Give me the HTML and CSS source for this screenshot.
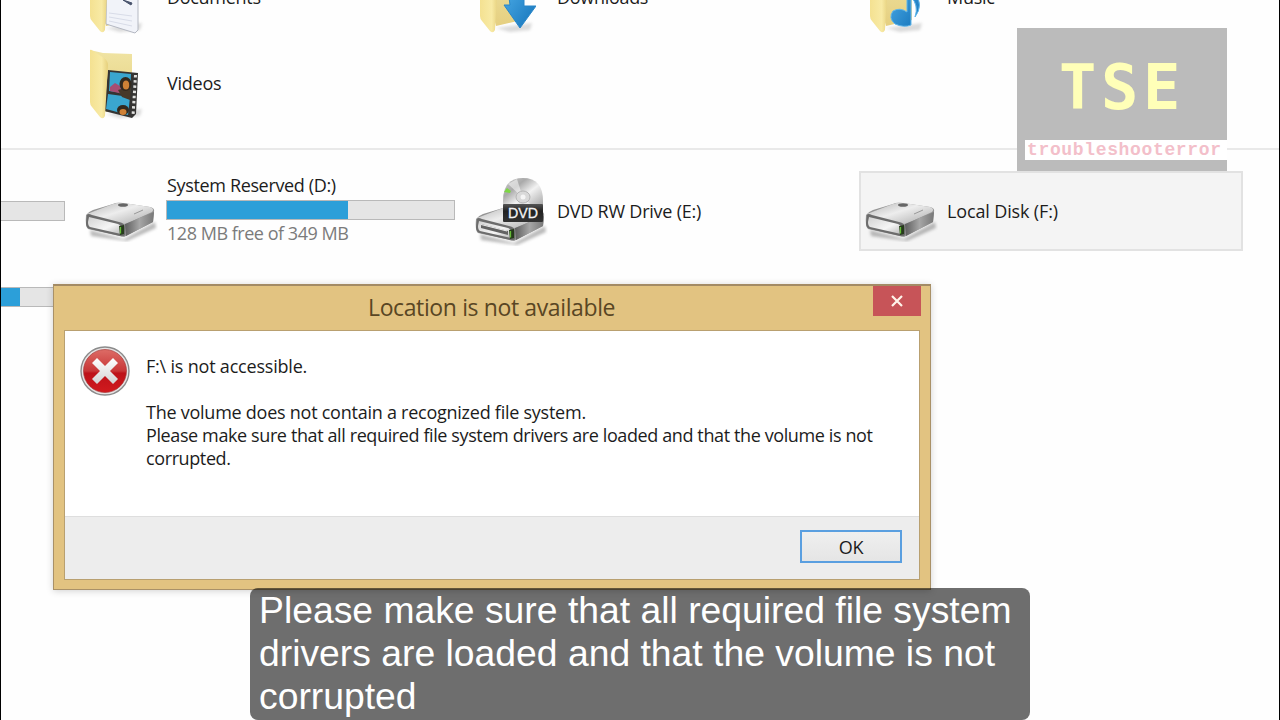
FILE: index.html
```html
<!DOCTYPE html>
<html lang="en">
<head>
<meta charset="utf-8">
<title>Location is not available</title>
<link rel="stylesheet" href="styles.css">
</head>
<body>
<svg class="defs" width="0" height="0" aria-hidden="true">
  <defs>
    <linearGradient id="front" x1="0" y1="0" x2="1" y2="0"><stop offset="0" stop-color="#f4e191"/><stop offset=".65" stop-color="#f8eaa5"/><stop offset="1" stop-color="#e6d07c"/></linearGradient>
    <linearGradient id="back" x1="0" y1="0" x2="0" y2="1"><stop offset="0" stop-color="#f0e4a3"/><stop offset="1" stop-color="#e5cf80"/></linearGradient>
    <linearGradient id="blue" x1="0" y1="0" x2="1" y2="1"><stop offset="0" stop-color="#4fb0ea"/><stop offset="1" stop-color="#1472b9"/></linearGradient>
    <linearGradient id="top" x1="0" y1="0" x2="1" y2="1"><stop offset="0" stop-color="#b4b4b4"/><stop offset=".45" stop-color="#ededed"/><stop offset="1" stop-color="#a9a9a9"/></linearGradient>
    <linearGradient id="side" x1="0" y1="0" x2="1" y2="0"><stop offset="0" stop-color="#5e5e5e"/><stop offset=".5" stop-color="#a6a6a6"/><stop offset="1" stop-color="#777"/></linearGradient>
    <linearGradient id="face" x1="0" y1="0" x2="1" y2="1"><stop offset="0" stop-color="#d2d2d2"/><stop offset=".6" stop-color="#f5f5f5"/><stop offset="1" stop-color="#b9b9b9"/></linearGradient>
    <linearGradient id="disc" x1="0" y1="0" x2="1" y2="1"><stop offset="0" stop-color="#ccc"/><stop offset=".3" stop-color="#aaa"/><stop offset=".55" stop-color="#f2f2f2"/><stop offset="1" stop-color="#999"/></linearGradient>
    <linearGradient id="plate" x1="0" y1="0" x2="0" y2="1"><stop offset="0" stop-color="#555"/><stop offset=".4" stop-color="#222"/><stop offset="1" stop-color="#333"/></linearGradient>
    <linearGradient id="red" x1="0" y1="0" x2="0" y2="1"><stop offset="0" stop-color="#dd6c66"/><stop offset=".5" stop-color="#c83637"/><stop offset=".55" stop-color="#bd1219"/><stop offset="1" stop-color="#d11a1e"/></linearGradient>
    <linearGradient id="cross" x1="0" y1="0" x2="0" y2="1"><stop offset="0" stop-color="#fff"/><stop offset="1" stop-color="#d3d3d3"/></linearGradient>
    <filter id="soft" x="-20%" y="-60%" width="140%" height="220%"><feGaussianBlur stdDeviation="1.6"/></filter>
    <symbol id="folder" viewBox="0 0 60 72">
      <path d="M20 66L34 70 54 68 56 61Z" fill="#999" opacity=".35" filter="url(#soft)"/>
      <path d="M4 2L17 5 46 6V58L20 64Z" fill="url(#back)"/>
    </symbol>
    <symbol id="flap" viewBox="0 0 60 72">
      <path d="M4 2Q5 1 7 3L18 10Q22 13 22 17L19 68Q17 72 14 69L6 59Q4 57 4 54Z" fill="url(#front)"/>
    </symbol>
    <symbol id="drive" viewBox="0 0 74 42">
      <path d="M6 30L40 39 71 22 72 28 43 41 7 36Z" fill="#777" opacity=".5" filter="url(#soft)"/>
      <path d="M2 15Q4 12 9 10L29 4Q32 2 39 3L66 7Q71 8 70 12L69 22 40 37 4 29Q1 27 2 15Z" fill="#959595"/>
      <path d="M3 14L29 4Q34 2 40 3L66 7Q71 9 68 12L42 24Q37 24 32 22L6 16Z" fill="url(#top)"/>
      <path d="M41 24L70 12 69 22 42 36Z" fill="url(#side)"/>
      <path d="M3 15Q4 13 8 15L35 22Q41 23 41 28V34Q41 37 36 36L6 29Q2 28 2 23Z" fill="#6c6c6c"/>
      <path d="M5 17L34 24Q37 25 37 28V34L6 27Q4 26 4 22Z" fill="url(#face)"/>
      <ellipse cx="39" cy="5" rx="5" ry="1.8" fill="#666"/>
      <path d="M50 14L59 10" stroke="#999"/>
      <path d="M35 26L40 25V34L36 35Z" fill="#263a1c"/><path d="M36.5 27V33.5" stroke="#65bc36" stroke-width="1.3"/>
    </symbol>
  </defs>
</svg>

<main class="explorer">
  <section class="grid folders">
    <div class="tile tile-docs">
      <svg class="icon" viewBox="0 0 60 72"><use href="#folder"/><path d="M21 5L52 9V68L49 71 20 62Z" fill="#f1f3f9" stroke="#b4b8c2"/><path d="M37 38L46 41 45 43Z" fill="#48536c" stroke="#48536c"/><path d="M23 51L46 54M23 55L46 59M23 59L46 64" stroke="#d8dce8"/><use href="#flap"/></svg>
      <span class="name w-docs">Documents</span>
    </div>
    <div class="tile">
      <svg class="icon" viewBox="0 0 60 72"><use href="#folder"/><use href="#flap"/><path d="M31 20H48V44H60L44 66 28 43H34Z" fill="url(#blue)" stroke="#2986c8"/></svg>
      <span class="name w-docs">Downloads</span>
    </div>
    <div class="tile">
      <svg class="icon" viewBox="0 0 60 72"><use href="#folder"/><use href="#flap"/><path d="M41 22V50Q34 45 27 49 22 56 29 62 38 66 45 63V35Q53 43 49 55 58 43 49 31L45 20Z" fill="url(#blue)" stroke="#60b6ea"/></svg>
      <span class="name">Music</span>
    </div>
    <div class="tile">
      <svg class="icon" viewBox="0 0 60 72"><use href="#folder"/>
        <path d="M22 22L52 25 50 66 46 70 18 63Z" fill="#353433"/>
        <path d="M24 24L45 26 44 46 23 43ZM22 46L44 49 42 67 20 61Z" fill="#3aa6cf"/>
        <path d="M24 39L29 35 34 38 37 46 24 43Z" fill="#a74e73"/><path d="M32 42L45 38 44 52 36 49Z" fill="#473929"/>
        <ellipse cx="39.500" cy="36" rx="6" ry="7" fill="#33291e"/><ellipse cx="40" cy="37" rx="3.200" ry="4.500" fill="#cf8136"/>
        <ellipse cx="37" cy="62" rx="6" ry="5" fill="#33291e"/><ellipse cx="37" cy="64" rx="3.500" ry="3" fill="#cf8136"/>
        <path d="M49.500 27L47 68" stroke="#e1e1df" stroke-width="3" stroke-dasharray="2.5 2.7"/>
        <use href="#flap"/></svg>
      <span class="name">Videos</span>
    </div>
  </section>

  <hr class="divider">

  <section class="grid drives">
    <div class="tile volume">
      <div class="details"><div class="bar"></div></div>
    </div>
    <div class="tile volume">
      <svg class="drive" viewBox="0 0 74 42"><use href="#drive"/></svg>
      <div class="details">
        <span class="name w-sys">System Reserved (D:)</span>
        <div class="bar"><div class="fill" style="width:63.200%"></div></div>
        <span class="free">128 MB free of 349 MB</span>
      </div>
    </div>
    <div class="tile volume">
      <svg class="dvd" viewBox="0 0 74 74">
        <svg y="28" width="74" height="42" viewBox="0 0 74 42"><use href="#drive"/><path d="M7 20L34 27V31L7 24Z" fill="#636363"/><path d="M7 20.500L33 27" stroke="#eee"/></svg>
        <path d="M29 25Q29 2 49 2T69 25V34H29Z" fill="url(#disc)"/>
        <path d="M49 22L34 8 43 3ZM49 22L64 34H50Z" fill="#fff" opacity=".5"/>
        <ellipse cx="49" cy="21" rx="7" ry="6" fill="#d9d9d9" stroke="#b5b5b5"/><circle cx="49" cy="21" r="2.500" fill="#f5f5f5"/>
        <path d="M30 16L33 12 37 15 36 17Z" fill="#7cd843"/>
        <rect x="29" y="28" width="40" height="18" rx="1" fill="url(#plate)"/>
        <text class="dvd-text" x="49" y="42" text-anchor="middle" textLength="30" lengthAdjust="spacingAndGlyphs">DVD</text>
      </svg>
      <div class="details"><span class="name w-dvd">DVD RW Drive (E:)</span></div>
    </div>
    <div class="tile volume hovered">
      <svg class="drive" viewBox="0 0 74 42"><use href="#drive"/></svg>
      <div class="details"><span class="name w-local">Local Disk (F:)</span></div>
    </div>
    <div class="tile volume">
      <div class="details"><div class="bar"><div class="fill" style="width:84.700%"></div></div></div>
    </div>
  </section>
</main>

<aside class="watermark">
  <div class="mark">TSE</div>
  <div class="mark-strip"><span class="mark-name">troubleshooterror</span></div>
</aside>

<div class="dialog" role="alertdialog">
  <header class="titlebar">
    <span class="title">Location is not available</span>
    <button class="close" aria-label="Close"><svg width="12" height="12" viewBox="0 0 12 12"><path d="M1 1L11 11M11 1L1 11" stroke="#fff4ea" stroke-width="2.200"/></svg></button>
  </header>
  <div class="client">
    <div class="message">
      <svg class="error" viewBox="0 0 50 50"><circle cx="25" cy="25" r="24" fill="#e6e4e4" stroke="#8b8b8b" stroke-width="1.400"/><circle cx="25" cy="25" r="21.500" fill="url(#red)" stroke="#a93a3a" stroke-width=".7"/><path d="M12 17L17 12 25 20 33 12 38 17 30 25 38 33 33 38 25 30 17 38 12 33 20 25Z" fill="url(#cross)"/></svg>
      <div class="text">
        <p class="lead">F:\ is not accessible.</p>
        <p class="line-a">The volume does not contain a recognized file system.</p>
        <p>Please make sure that all required file system drivers are loaded and that the volume is not<br>corrupted.</p>
      </div>
    </div>
    <footer class="actions"><button class="ok">OK</button></footer>
  </div>
</div>

<div class="caption">Please make sure that all required file system<br>drivers are loaded and that the volume is not<br>corrupted</div>
</body>
</html>
```
FILE: styles.css
```css
* { box-sizing: border-box; }
body {
  position: relative;
  width: 1280px;
  height: 720px;
  margin: 0;
  overflow: hidden;
  background: #fefefe;
  font-family: "Open Sans", "Noto Sans", sans-serif;
  font-size: 18px;
  color: #1c1c1c;
}
p { margin: 0; }
button { font: inherit; padding: 0; border: 0; }
.defs { position: absolute; }

.explorer {
  height: 720px;
  overflow: hidden;
  border-left: 1px solid #000;
  border-right: 1px solid #000;
}
.grid { display: grid; gap: 7px 6px; }
.folders {
  grid-template-columns: repeat(3, 384px);
  margin: -42px 0 0 79px;
}
.drives {
  grid-template-columns: repeat(4, 384px);
  margin: 21px 0 0 -312px;
}
.tile {
  display: flex;
  align-items: center;
  height: 79px;
  padding-left: 6px;
}
.icon { width: 60px; height: 72px; flex: none; }
.folders .name { margin-left: 21px; padding-bottom: 2px; }
.name { display: block; line-height: 24px; letter-spacing: -.25px; white-space: nowrap; }
.w-docs { letter-spacing: -.3px; }
.w-sys { margin: -2px 0 3px; letter-spacing: -.35px; }
.w-dvd { letter-spacing: -.23px; }
.w-local { letter-spacing: -.14px; }
.divider { height: 2px; margin: 25px 0 0; border: 0; background: #e9e9e9; }

.volume { padding-left: 5px; }
.drive { width: 74px; height: 42px; flex: none; margin-top: 20px; }
.dvd { width: 74px; height: 74px; flex: none; margin-top: 4px; }
.dvd-text { font: 15px "Liberation Sans", sans-serif; fill: #f3f3f3; stroke: #f3f3f3; stroke-width: .3px; }
.details { width: 289px; margin-left: 8px; }
.volume > .details:first-child { margin-left: 82px; }
.bar { height: 20px; border: 1px solid #b9b9b9; background: #e5e5e5; }
.fill { height: 18px; background: #2c9fd9; }
.volume .name, .free { padding-left: 1px; }
.free { display: block; line-height: 26px; letter-spacing: -.47px; color: #7b7b7b; }
.hovered { height: 80px; margin-bottom: -1px; border: 2px solid #e2e2e2; padding-left: 3px; background: #f4f4f4; }

.watermark {
  position: absolute;
  left: 1017px;
  top: 28px;
  width: 210px;
  height: 143px;
  padding-left: 8px;
  background: #bbb;
}
.mark {
  height: 112px;
  padding-left: 34px;
  font: bold 62px/120px "DejaVu Sans Mono", monospace;
  letter-spacing: 4.700px;
  color: #ffffb8;
}
.mark-strip { height: 20px; padding-left: 2px; background: #fff; }
.mark-name {
  display: block;
  font: bold 18px/21px "Liberation Mono", monospace;
  letter-spacing: .65px;
  color: #f3bfca;
}

.dialog {
  position: absolute;
  left: 53px;
  top: 284px;
  width: 878px;
  height: 306px;
  padding: 0 10px 10px;
  border: 1px solid #a99168;
  border-top: 2px solid #a38b65;
  background: #e2c381;
  box-shadow: 0 1px 7px rgba(0, 0, 0, .18);
}
.titlebar { display: flex; height: 44px; }
.title {
  flex: 1;
  padding-left: 304px;
  font-size: 23px;
  line-height: 43px;
  letter-spacing: -.38px;
  color: #594624;
}
.close {
  display: flex;
  align-items: center;
  justify-content: center;
  width: 48px;
  height: 30px;
  margin-right: -1px;
  background: #c75458;
}
.client {
  display: flex;
  flex-direction: column;
  height: 250px;
  border: 1px solid #b9a070;
  background: #fff;
}
.message { display: flex; flex: 1; padding: 15px 0 0 15px; }
.error { width: 50px; height: 50px; flex: none; }
.text { padding: 9px 0 0 16px; line-height: 23px; letter-spacing: -.39px; white-space: nowrap; }
.lead { margin-bottom: 23px; letter-spacing: -.2px; }
.line-a { letter-spacing: -.25px; }
.actions {
  display: flex;
  justify-content: flex-end;
  align-items: center;
  height: 63px;
  padding: 0 17px 3px 0;
  border-top: 1px solid #dedede;
  background: #ededed;
}
.ok {
  width: 102px;
  height: 33px;
  border: 2px solid #5a9fe0;
  background: linear-gradient(#efefef, #e5e5e5);
  color: #1c1c1c;
  letter-spacing: -.3px;
}

.caption {
  position: absolute;
  left: 250px;
  top: 588px;
  width: 780px;
  height: 132px;
  padding: 1px 9px;
  border-radius: 8px;
  background: rgba(8, 8, 8, .588);
  font: 37.300px/43px "Liberation Sans", Arial, sans-serif;
  color: #fff;
  white-space: nowrap;
}
```
